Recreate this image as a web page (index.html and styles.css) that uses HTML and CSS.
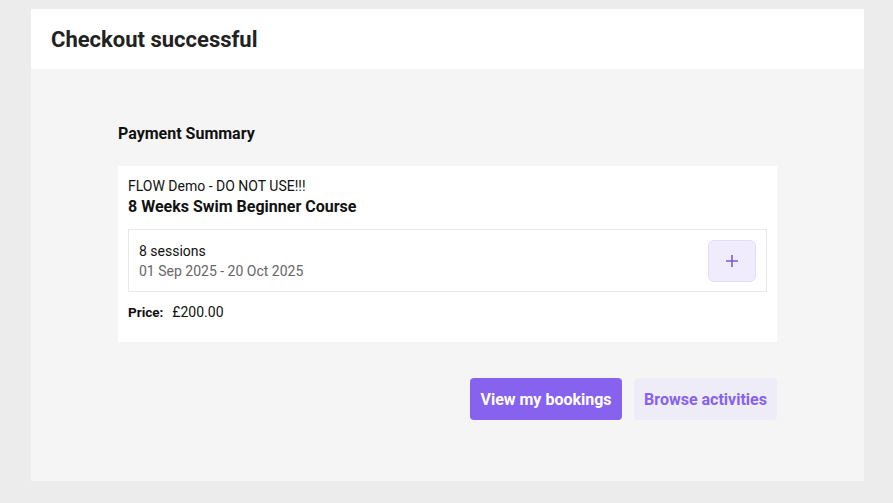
FILE: index.html
```html
<!DOCTYPE html>
<html lang="en">

<head>
    <meta charset="UTF-8">
    <meta name="viewport" content="width=device-width, initial-scale=1.0">
    <title>Checkout successful</title>
    <link rel="stylesheet" href="styles.css">
</head>

<body>
    <div class="card">
        <div class="card-header">
            <h1>Checkout successful</h1>
        </div>
        <div class="card-body">
            <div class="summary">
                <h2>Payment Summary</h2>
                <div class="order">
                    <div class="provider">FLOW Demo - DO NOT USE!!!</div>
                    <div class="course">8 Weeks Swim Beginner Course</div>
                    <div class="sessions">
                        <div>
                            <div class="count">8 sessions</div>
                            <div class="dates">01 Sep 2025 - 20 Oct 2025</div>
                        </div>
                        <button class="expand" aria-label="Show sessions">
                            <svg width="14" height="14" viewBox="0 0 14 14">
                                <path d="M7 1v12M1 7h12" stroke="#7a5bd6" stroke-width="1.6" fill="none" />
                            </svg>
                        </button>
                    </div>
                    <div class="price"><b>Price:</b><span>£200.00</span></div>
                </div>
                <div class="actions">
                    <button class="btn btn-primary">View my bookings</button>
                    <button class="btn btn-light">Browse activities</button>
                </div>
            </div>
        </div>
    </div>
</body>

</html>
```

FILE: styles.css
```css
body {
    margin: 0;
    padding: 9px 29px 22px 31px;
    background-color: #ececec;
    font-family: Roboto, "Liberation Sans", sans-serif;
    color: #111;
}

.card {
    background-color: #f5f5f5;
}

.card-header {
    background-color: #fff;
    height: 60px;
    display: flex;
    align-items: center;
    padding: 0 20px;
}

.card-header h1 {
    margin: 0;
    font-size: 22px;
    font-weight: 700;
    color: #222;
}

.card-body {
    height: 412px;
    padding-top: 56px;
    box-sizing: border-box;
}

.summary {
    width: 659px;
    margin: 0 auto;
}

.summary h2 {
    margin: 0 0 23px;
    font-size: 16px;
    font-weight: 700;
    line-height: 18px;
}

.order {
    background-color: #fff;
    padding: 12px 10px 22px;
}

.provider {
    font-size: 14px;
    line-height: 16px;
}

.course {
    font-size: 16px;
    font-weight: 700;
    line-height: 21px;
    margin-top: 2px;
}

.sessions {
    margin-top: 12px;
    border: 1px solid #e8e8e8;
    height: 63px;
    box-sizing: border-box;
    display: flex;
    align-items: center;
    justify-content: space-between;
    padding: 0 10px;
}

.count {
    font-size: 14px;
    line-height: 20px;
}

.dates {
    font-size: 14px;
    line-height: 20px;
    color: #666;
}

.expand {
    width: 48px;
    height: 42px;
    border: 1px solid #e3dbfb;
    background-color: #f1ecfd;
    border-radius: 6px;
    display: flex;
    align-items: center;
    justify-content: center;
    padding: 0;
}

.price {
    margin-top: 12px;
    font-size: 14px;
    line-height: 16px;
    display: flex;
    gap: 9px;
}

.price b {
    font-size: 13.5px;
}

.actions {
    margin-top: 36px;
    display: flex;
    justify-content: flex-end;
    gap: 12px;
}

.btn {
    height: 42px;
    border: none;
    border-radius: 4px;
    font-family: Roboto, "Liberation Sans", sans-serif;
    font-size: 16px;
    font-weight: 700;
    padding: 0 10px;
}

.btn-primary {
    background-color: #8662ee;
    color: #fff;
    width: 152px;
}

.btn-light {
    background-color: #eeecf6;
    color: #8662ee;
    width: 143px;
}
```
